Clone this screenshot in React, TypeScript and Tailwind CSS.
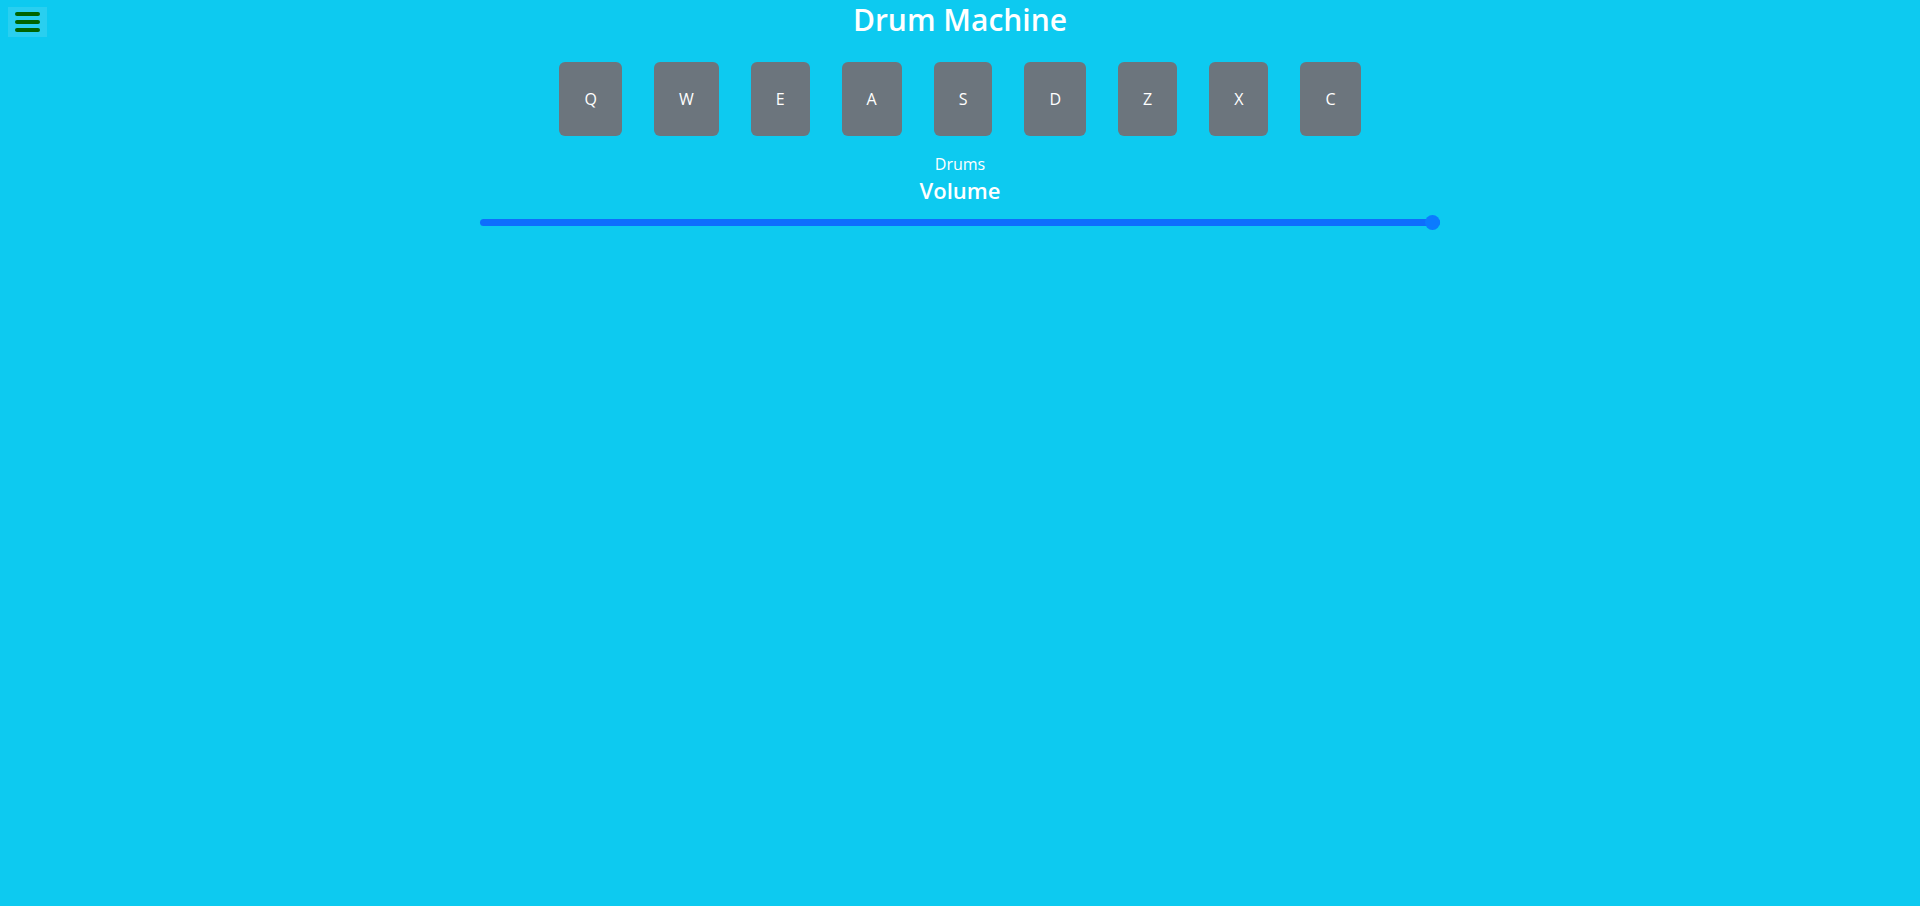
import { useState } from 'react';

const pads = ['Q', 'W', 'E', 'A', 'S', 'D', 'Z', 'X', 'C'];

export default function App() {
  const [display] = useState('Drums');
  const [volume] = useState(100);

  return (
    <div className="relative min-h-screen bg-[#0dcaf0] text-white" style={{ fontFamily: '"Open Sans", "Noto Sans", sans-serif' }}>
      {/* menu toggle */}
      <button className="absolute left-2 top-[7px] flex h-[30px] w-[39px] flex-col items-center justify-center gap-1 bg-[#29cff0]">
        <span className="block h-1 w-[25px] rounded-full bg-[#006400]" />
        <span className="block h-1 w-[25px] rounded-full bg-[#006400]" />
        <span className="block h-1 w-[25px] rounded-full bg-[#006400]" />
      </button>

      <div id="drum-machine" className="flex flex-col items-center">
        <h1 className="pt-[1px] text-[30px] font-semibold leading-[37px]">Drum Machine</h1>

        <div className="mt-6 flex gap-8">
          {pads.map((key) => (
            <button key={key} className="rounded-md bg-[#6c757d] px-[25px] py-[25px] text-base leading-6 text-white">
              {key}
            </button>
          ))}
        </div>

        <p id="display" className="mt-4 text-base leading-6">{display}</p>
        <h4 className="text-[22px] font-semibold leading-[28px]">Volume</h4>

        <div className="relative mt-[10px] flex h-4 w-1/2 items-center">
          <div className="h-[7px] w-full rounded-full bg-[#0d6efd]" />
          <div
            className="absolute top-[0.5px] h-[15px] w-[15px] rounded-full bg-[#0b7bff]"
            style={{ left: `calc(${volume}% - 15px)` }}
          />
        </div>
      </div>
    </div>
  );
}
